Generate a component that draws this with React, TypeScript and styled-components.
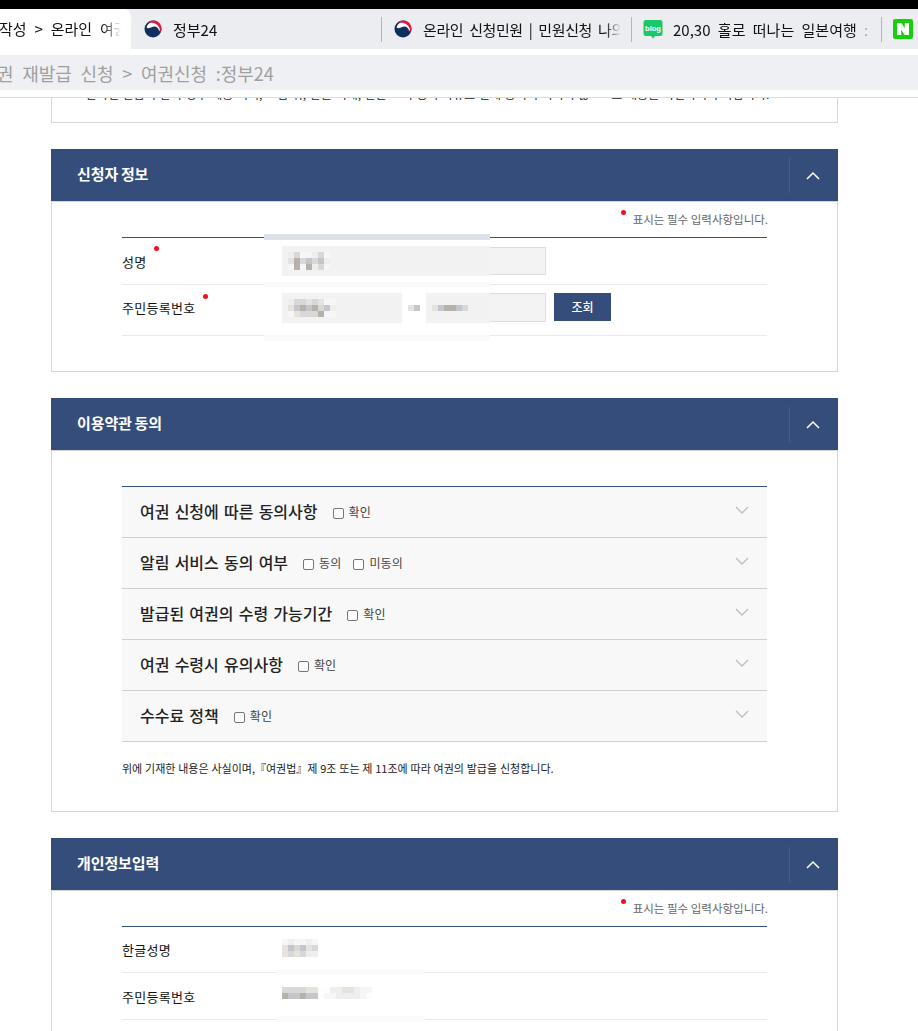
import React from "react";
import styled, { createGlobalStyle } from "styled-components";

const KR = `"Noto Sans CJK KR", "Liberation Sans", sans-serif`;
const NAVY = "#344d7a";

const Global = createGlobalStyle`
  html, body { margin: 0; padding: 0; background: #fff; height: 1031px; overflow: hidden; }
  body { font-family: ${KR}; color: #222; }
  * { box-sizing: border-box; }
`;

const Blackbar = styled.div`height: 9px; background: #000;`;
const TabStrip = styled.div`display: flex; height: 40px; background: #ecedf1; overflow: hidden;`;
const ActiveTab = styled.div`
  flex: none; width: 131px; background: #fff; border-radius: 0 8px 0 0; display: flex; align-items: center;
  padding-bottom: 1px; font-size: 15px; color: #111; white-space: nowrap; overflow: hidden;
  span { display: block; width: 123px; margin-left: -1px; overflow: hidden; word-spacing: 4.5px;
    -webkit-mask-image: linear-gradient(90deg, #000 104px, transparent 122px); }
`;
const Tab = styled.div<{ $w: number; $pad: number; $sep?: boolean }>`
  position: relative; flex: none; width: ${p => p.$w}px; display: flex; align-items: center; gap: 10px; padding-left: ${p => p.$pad}px;
  font-size: 15px; color: #111; white-space: nowrap; overflow: hidden;
  &::after { content: ""; display: ${p => (p.$sep ? "block" : "none")}; position: absolute; right: 0; top: 8px; height: 25px; width: 1px; background: #b4b5b8; }
`;
const TabText = styled.span<{ $w: number; $ml?: number; $ws?: number; $ls?: number }>`
  display: block; width: ${p => p.$w}px; margin-left: ${p => p.$ml ?? 0}px; overflow: hidden;
  word-spacing: ${p => p.$ws ?? 1}px; letter-spacing: ${p => p.$ls ?? 0}px;
  -webkit-mask-image: linear-gradient(90deg, #000 calc(100% - 16px), transparent 100%);
`;
const AddressGap = styled.div`height: 6px; background: #fff;`;
const AddressBar = styled.div`
  height: 35px; background: #eff0f3; display: flex; align-items: center; color: #a0a0a0;
  font-size: 18px; white-space: nowrap; overflow: hidden; word-spacing: 4.6px;
  span { margin-left: -3px; }
`;
const PageGap = styled.div`height: 7px; background: #fff;`;
const TopLine = styled.div`height: 1px; background: #ddd;`;

const Page = styled.div`width: 787px; margin-left: 51px; display: flex; flex-direction: column; gap: 26px;`;
const NoticeClip = styled.div`
  height: 25px; border: 1px solid #d6d6d6; border-top: 0; overflow: hidden; position: relative;
`;
const NoticeText = styled.div`
  font-size: 12px; line-height: 16px; margin: -12px 0 0 34px; color: #222; white-space: nowrap; word-spacing: 1px;
`;

const Panel = styled.section`display: flex; flex-direction: column;`;
const PanelHead = styled.header`
  height: 52px; background: ${NAVY}; display: flex; align-items: center; justify-content: space-between; padding-left: 26px;
`;
const PanelTitle = styled.h2`
  margin: 0; font-size: 15px; font-weight: 700; color: #fff; letter-spacing: -0.1px; word-spacing: -0.5px; padding-bottom: 3px;
`;
const Toggle = styled.div`
  width: 49px; height: 35px; border-left: 1px solid #465e8b; display: flex; align-items: center; justify-content: center; padding-right: 3px;
`;
const PanelBody = styled.div<{ $h?: number }>`
  border: 1px solid #d6d6d6; padding: 0 70px; ${p => (p.$h ? `height: ${p.$h}px;` : "")}
`;
const Required = styled.div`
  height: 35px; display: flex; justify-content: flex-end; align-items: flex-end; padding-bottom: 10px; margin-right: -1px;
  font-size: 11.5px; line-height: 16px; color: #666; position: relative;
`;
const ReqDot = styled.i`
  position: absolute; right: 142px; top: 8px; width: 5px; height: 5px; border-radius: 50%; background: #f01020;
`;
const Table = styled.div`border-top: 1px solid ${NAVY}; position: relative;`;
const Row = styled.div<{ $h: number }>`
  position: relative; display: flex; align-items: center; height: ${p => p.$h}px; border-bottom: 1px solid #eaeaea;
`;
const Label = styled.div<{ $mb?: number }>`
  position: relative; width: 160px; font-size: 13px; font-weight: 400; color: #111; flex: none; letter-spacing: 0.3px;
  margin-bottom: ${p => p.$mb ?? 0}px;
`;
const LabelDot = styled.i<{ $left: number; $top: number }>`
  position: absolute; left: ${p => p.$left}px; top: ${p => p.$top}px; width: 5px; height: 5px; border-radius: 50%; background: #f01020;
`;
const Field = styled.div<{ $w: number; $h: number }>`
  width: ${p => p.$w}px; height: ${p => p.$h}px; background: #f3f3f3; border: 1px solid #ddd;
`;
const Fields = styled.div<{ $mb?: number }>`display: flex; align-items: flex-start; margin-bottom: ${p => p.$mb ?? 0}px;`;
const FieldDash = styled.div`width: 24px;`;
const LookupButton = styled.button`
  margin-left: 8px; width: 57px; height: 28px; background: ${NAVY}; border: 0; color: #fff; font: 500 12px ${KR}; padding: 0 0 1px;
`;
const RedactPatch = styled.div`
  position: absolute; left: 142px; top: -4px; width: 226px; height: 107px; background: #fff;
  display: flex; flex-direction: column;
`;
const PatchBand = styled.div`height: 6px; background: #dde1e8;`;
const PatchFaint = styled.div<{ $mt: number }>`height: 6px; margin-top: ${p => p.$mt}px; background: #fafafa;`;
const PatchField = styled.div<{ $mt: number }>`
  margin: ${p => p.$mt}px 0 0 18px; height: 30px; display: flex; align-items: center;
`;
const BlurField = styled.div<{ $w: number; $pad: number }>`
  width: ${p => p.$w}px; height: 30px; background: #f2f2f2; display: flex; align-items: center; padding-left: ${p => p.$pad}px; flex: none;
`;
const DashBlur = styled.div`width: 24px; flex: none; display: flex; justify-content: center;`;
const FaintStrip = styled.div<{ $top: number }>`
  position: absolute; left: 155px; top: ${p => p.$top}px; width: 148px; height: 6px; background: #fbfbfb;
`;
const ValueBlur = styled.div<{ $mb: number }>`display: flex; margin-bottom: ${p => p.$mb}px; position: relative;`;

const Accordion = styled.div`margin-top: 35px; border-top: 1px solid ${NAVY};`;
const AccItem = styled.div`
  height: 51px; background: #f8f8f8; border-bottom: 1px solid #cfcfcf; display: flex; align-items: center; padding: 0 18px; position: relative;
`;
const AccTitle = styled.span`
  font-size: 16px; font-weight: 500; color: #222; word-spacing: 1.6px; margin-right: 15px; padding-bottom: 3px;
`;
const Box = styled.span`
  display: inline-block; flex: none; width: 11px; height: 11px; margin: 3px 5px 0 0; border: 1px solid #767676; border-radius: 2px; background: #fff;
`;
const Check = styled.span`
  font-size: 12px; color: #444; margin-right: 12px; padding-bottom: 1px; letter-spacing: 0.1px;
`;
const AccChevron = styled.span`
  position: absolute; right: 18px; top: 19px; display: flex;
`;
const Declaration = styled.p`
  margin: 0; padding: 18px 0 35px; font-size: 11px; line-height: 16px; color: #222; word-spacing: 0.35px; white-space: nowrap;
`;

const palette: Record<string, string> = {
  a: "#b6b1aa", b: "#c5c6cc", c: "#d8d8d8", d: "#e6e3de", e: "#eeeeee", f: "#f6f6f6", g: "#fdfdfd",
};
const Mosaic = ({ rows, cell = 6 }: { rows: string[]; cell?: number }) => (
  <svg width={rows[0].length * cell} height={rows.length * cell} style={{ display: "block" }} aria-hidden>
    {rows.flatMap((r, y) =>
      r.split("").map((c, x) => <rect key={`${x}-${y}`} x={x * cell} y={y * cell} width={cell} height={cell} fill={palette[c]} />)
    )}
  </svg>
);

const Taegeuk = () => (
  <svg width="18" height="18" viewBox="0 0 18 18">
    <circle cx="9" cy="9" r="8.5" fill="#0f2f5f" />
    <path d="M2.500 7.200C3.500 3.500 6.800 1.800 9.500 1.900c3.700.1 6.400 3 6.500 6.400 0 1.200-.3 2.300-.8 3.200-.3-2.900-2.300-5-4.900-5-2.200 0-3.500 1.400-5 1.600-1.200.2-2.200-.1-2.800-.9Z" fill="#fff" />
    <path d="M3.600 2.900C5.300 1.100 7.600.3 10.100.6c3.800.5 6.800 3.400 7.300 7.100.2 1.600 0 3.200-.7 4.600-.2.400-.5.300-.5-.1.300-3.900-2-7.500-5.700-8.900C8.300 2.500 5.900 2.400 3.600 2.900Z" fill="#e4173e" />
  </svg>
);
const BlogIcon = () => (
  <svg width="20" height="20" viewBox="0 0 20 20">
    <path d="M3 1h14a2.500 2.500 0 0 1 2.500 2.500v11A2.500 2.500 0 0 1 17 17h-5l-2 2.500L8 17H3A2.500 2.500 0 0 1 .5 14.500v-11A2.500 2.500 0 0 1 3 1Z" fill="#19c868" />
    <text x="10" y="11.500" textAnchor="middle" fontSize="7.500" fontWeight="700" fill="#fff" fontFamily="Liberation Sans, sans-serif">blog</text>
  </svg>
);
const NaverIcon = () => (
  <svg width="20" height="20" viewBox="0 0 20 20">
    <rect width="20" height="20" rx="2" fill="#19ce0b" />
    <path d="M4 4h4.400l3.400 5.200V4H16v12h-4.400L8.200 10.800V16H4Z" fill="#fff" />
  </svg>
);
const ChevronUp = () => (
  <svg width="14" height="9" viewBox="0 0 14 9"><path d="M1 8 7 2l6 6" fill="none" stroke="#fff" strokeWidth="1.500" /></svg>
);
const ChevronDown = () => (
  <svg width="14" height="9" viewBox="0 0 14 9"><path d="M1 1l6 6 6-6" fill="none" stroke="#bdbdbd" strokeWidth="1.300" /></svg>
);

const Head = ({ title }: { title: string }) => (
  <PanelHead>
    <PanelTitle>{title}</PanelTitle>
    <Toggle><ChevronUp /></Toggle>
  </PanelHead>
);
const Req = () => (
  <Required><ReqDot />표시는 필수 입력사항입니다.</Required>
);
const Acc = ({ title, opts }: { title: string; opts: string[] }) => (
  <AccItem>
    <AccTitle>{title}</AccTitle>
    {opts.map(o => (
      <React.Fragment key={o}><Box /><Check>{o}</Check></React.Fragment>
    ))}
    <AccChevron><ChevronDown /></AccChevron>
  </AccItem>
);

export default function App() {
  return (
    <>
      <Global />
      <Blackbar />
      <TabStrip>
        <ActiveTab><span>작성 &gt; 온라인 여권 재발급</span></ActiveTab>
        <Tab $w={251} $pad={13} $sep><Taegeuk /><TabText $w={200} $ml={1}>정부24</TabText></Tab>
        <Tab $w={250} $pad={12} $sep><Taegeuk /><TabText $w={198} $ml={1} $ws={3} $ls={-0.4}>온라인 신청민원 | 민원신청 나의민원</TabText></Tab>
        <Tab $w={250} $pad={11} $sep><BlogIcon /><TabText $w={198} $ws={4}>20,30 홀로 떠나는 일본여행 : 네이버</TabText></Tab>
        <Tab $w={37} $pad={11}><NaverIcon /></Tab>
      </TabStrip>
      <AddressGap />
      <AddressBar><span>권 재발급 신청 &gt; 여권신청 :정부24</span></AddressBar>
      <PageGap />
      <TopLine />
      <Page>
        <NoticeClip>
          <NoticeText>온라인 발급 수단의 경우 제공 되며, 그림 위, 말을 이해, 말을 그 수정의 사유로 인해 등이 수리되지 않으므로 내용을 확인하시기 바랍니다.</NoticeText>
        </NoticeClip>
        <Panel>
          <Head title="신청자 정보" />
          <PanelBody $h={171}>
            <Req />
            <Table>
              <Row $h={47}>
                <Label>성명<LabelDot $left={32} $top={-6} /></Label>
                <Fields><Field $w={264} $h={28} /></Fields>
              </Row>
              <Row $h={51}>
                <Label $mb={5}>주민등록번호<LabelDot $left={81} $top={-4} /></Label>
                <Fields $mb={5}>
                  <Field $w={120} $h={29} /><FieldDash /><Field $w={120} $h={29} />
                  <LookupButton>조회</LookupButton>
                </Fields>
              </Row>
              <RedactPatch>
                <PatchBand />
                <PatchField $mt={6}>
                  <BlurField $w={208} $pad={6}>
                    <Mosaic rows={["ecffecf", "dacbcbe", "fafaecf"]} />
                  </BlurField>
                </PatchField>
                <PatchFaint $mt={6} />
                <PatchField $mt={6}>
                  <BlurField $w={120} $pad={6}>
                    <Mosaic rows={["eccdcdff", "dbabacbe", "fdcccaff"]} />
                  </BlurField>
                  <DashBlur><Mosaic rows={["db"]} /></DashBlur>
                  <BlurField $w={64} $pad={6}>
                    <Mosaic rows={["dbaabc"]} />
                  </BlurField>
                </PatchField>
                <PatchFaint $mt={12} />
              </RedactPatch>
            </Table>
          </PanelBody>
        </Panel>
        <Panel>
          <Head title="이용약관 동의" />
          <PanelBody>
            <Accordion>
              <Acc title="여권 신청에 따른 동의사항" opts={["확인"]} />
              <Acc title="알림 서비스 동의 여부" opts={["동의", "미동의"]} />
              <Acc title="발급된 여권의 수령 가능기간" opts={["확인"]} />
              <Acc title="여권 수령시 유의사항" opts={["확인"]} />
              <Acc title="수수료 정책" opts={["확인"]} />
            </Accordion>
            <Declaration>위에 기재한 내용은 사실이며,『여권법』제 9조 또는 제 11조에 따라 여권의 발급을 신청합니다.</Declaration>
          </PanelBody>
        </Panel>
        <Panel>
          <Head title="개인정보입력" />
          <PanelBody $h={300}>
            <Req />
            <Table>
              <Row $h={46}>
                <Label>한글성명</Label>
                <ValueBlur $mb={4}><Mosaic rows={["feffef", "dbcbdc", "dcdcee"]} /></ValueBlur>
                <FaintStrip $top={42} />
              </Row>
              <Row $h={47}>
                <Label>주민등록번호</Label>
                <ValueBlur $mb={6}><Mosaic rows={["ccccddggeeddeff", "abbabbgffeeeefg"]} /></ValueBlur>
                <FaintStrip $top={43} />
              </Row>
            </Table>
          </PanelBody>
        </Panel>
      </Page>
    </>
  );
}
